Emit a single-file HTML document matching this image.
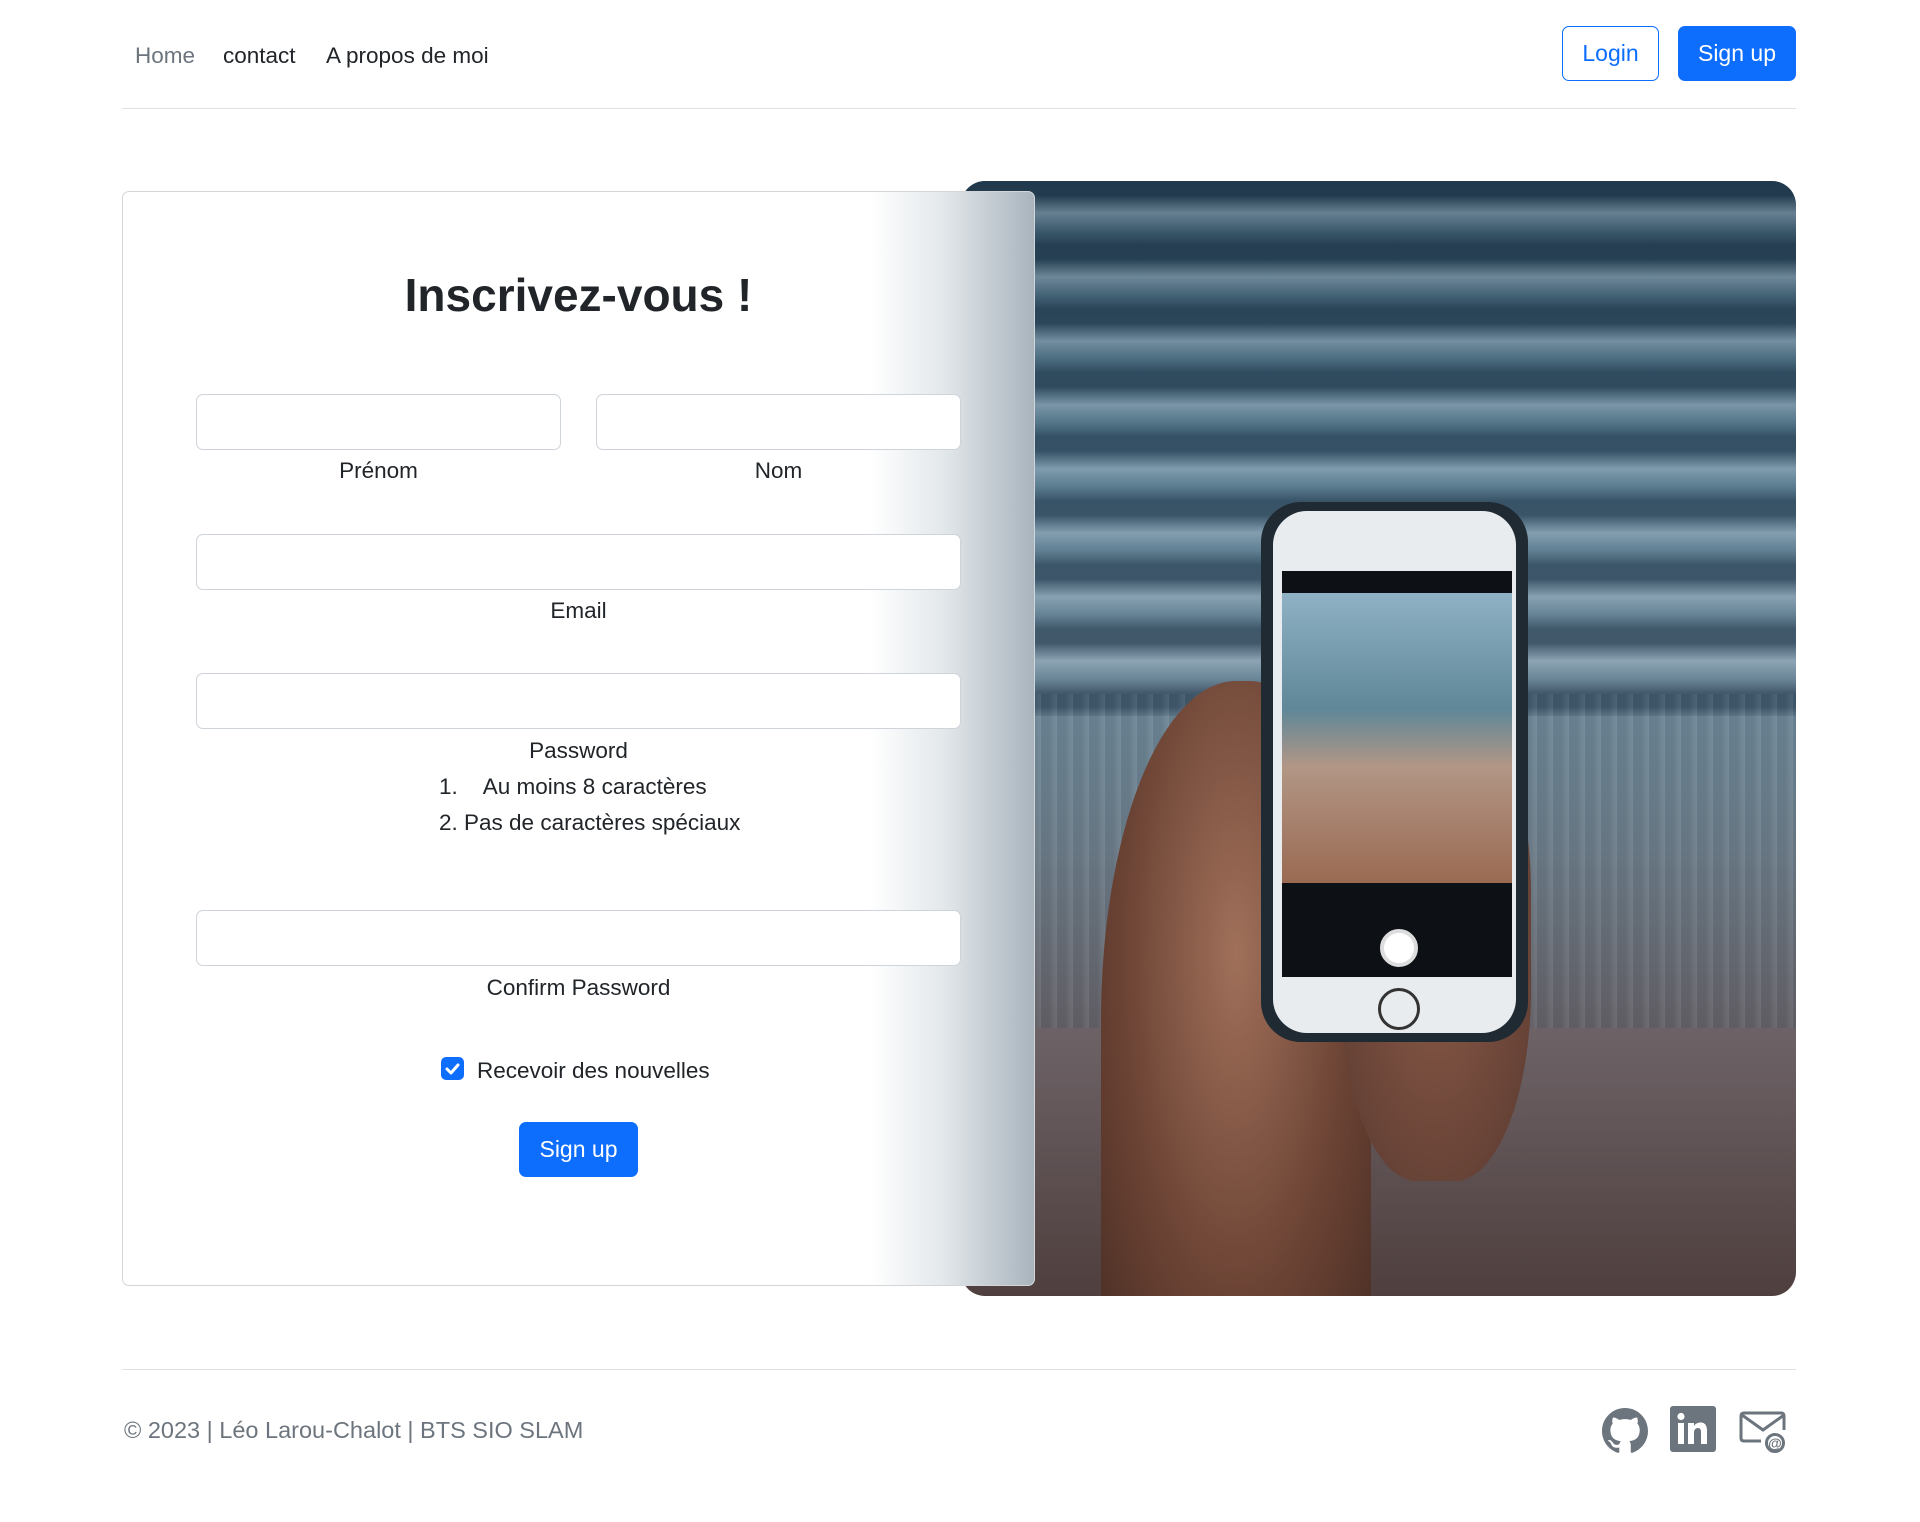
<!DOCTYPE html>
<html><head><meta charset="utf-8"><style>
*{box-sizing:border-box;margin:0;padding:0}
body{width:1920px;height:1522px;background:#fff;font-family:"Liberation Sans",sans-serif;color:#212529;position:relative;overflow:hidden;font-size:20px}
.abs{position:absolute}
.nav a{position:absolute;top:43px;font-size:22.5px;color:#212529;text-decoration:none}
.btn{position:absolute;border-radius:7px;font-size:23px;display:flex;align-items:center;justify-content:center}
.hr{position:absolute;left:122px;width:1674px;height:1px;background:#dee2e6}
.card{position:absolute;left:122px;top:191px;width:913px;height:1095px;border:1px solid #d3d6d9;border-radius:7px;background:linear-gradient(to right,#fff 0%,#fff 82%,#e3e8eb 90%,#a9b4bd 100%);z-index:2}
.inp{position:absolute;height:56px;border:1px solid #ced4da;border-radius:7px;background:#fff}
.lbl{position:absolute;text-align:center;font-size:22.5px;transform:translateY(-50%)}
</style></head><body>
<div class="nav">
<a style="left:135px;color:#6c757d">Home</a>
<a style="left:223px">contact</a>
<a style="left:326px">A propos de moi</a>
</div>
<div class="btn" style="left:1562px;top:26px;width:97px;height:55px;border:1px solid #0d6efd;color:#0d6efd">Login</div>
<div class="btn" style="left:1678px;top:26px;width:118px;height:55px;background:#0d6efd;color:#fff">Sign up</div>
<div class="hr" style="top:108px"></div>

<div class="abs" style="left:961px;top:181px;width:835px;height:1115px;border-radius:24px;overflow:hidden;background:linear-gradient(to bottom,#2a4759 0%,#5a7f93 25%,#7690a0 45%,#76828c 60%,#6e6468 75%,#4f3f3e 100%)">
 <div class="abs" style="left:0;top:0;width:100%;height:48%;background:repeating-linear-gradient(to bottom,rgba(25,45,65,.55) 0 14px,rgba(170,190,205,.45) 32px,rgba(80,110,130,.3) 50px,rgba(25,45,65,.55) 64px)"></div>
 <div class="abs" style="left:0;top:46%;width:100%;height:30%;background:repeating-linear-gradient(to right,rgba(40,70,90,.2) 0 8px,rgba(120,150,165,.2) 16px)"></div>
 <div class="abs" style="left:140px;top:500px;width:270px;height:680px;border-radius:50% 45% 0 0;background:radial-gradient(ellipse at 50% 40%,#a0705a,#6b4334 60%,#4a2e25)"></div>
 <div class="abs" style="left:380px;top:520px;width:190px;height:480px;border-radius:40%;background:radial-gradient(ellipse,#8a5a48,#5a3a30)"></div>
 <div class="abs" style="left:300px;top:321px;width:267px;height:540px;border-radius:40px;background:#1f2a33"></div>
 <div class="abs" style="left:312px;top:330px;width:243px;height:522px;border-radius:34px;background:#e9ecef"></div>
 <div class="abs" style="left:321px;top:390px;width:230px;height:406px;background:#0d1115"></div>
 <div class="abs" style="left:321px;top:412px;width:230px;height:290px;background:linear-gradient(to bottom,#8fb2c4 0%,#5f8798 40%,#b29685 60%,#9a6a52 100%)"></div>
 <div class="abs" style="left:419px;top:748px;width:38px;height:38px;border-radius:50%;border:4px solid #ddd;background:#fff"></div>
 <div class="abs" style="left:417px;top:807px;width:42px;height:42px;border-radius:50%;border:3px solid #333"></div>
</div>

<div class="card"></div>
<div style="position:absolute;left:0;top:0;z-index:3">
<div class="abs" style="left:122px;width:913px;top:268px;text-align:center;font-size:46px;font-weight:bold;white-space:nowrap">Inscrivez-vous !</div>
<div class="inp" style="left:196px;top:394px;width:365px"></div>
<div class="inp" style="left:596px;top:394px;width:365px"></div>
<div class="lbl" style="left:196px;width:365px;top:471px">Prénom</div>
<div class="lbl" style="left:596px;width:365px;top:471px">Nom</div>
<div class="inp" style="left:196px;top:534px;width:765px"></div>
<div class="lbl" style="left:196px;width:765px;top:611px">Email</div>
<div class="inp" style="left:196px;top:673px;width:765px"></div>
<div class="lbl" style="left:196px;width:765px;top:751px">Password</div>
<div class="lbl" style="left:439px;top:787px;text-align:left;white-space:nowrap">1.&nbsp;&nbsp;&nbsp;&nbsp;Au moins 8 caractères</div>
<div class="lbl" style="left:439px;top:823px;text-align:left;white-space:nowrap">2. Pas de caractères spéciaux</div>
<div class="inp" style="left:196px;top:910px;width:765px"></div>
<div class="lbl" style="left:196px;width:765px;top:988px">Confirm Password</div>
<div class="abs" style="left:441px;top:1057px;width:23px;height:23px;border-radius:5px;background:#0d6efd"><svg width="23" height="23" viewBox="0 0 23 23"><path d="M6 12l4 4 7-8" stroke="#fff" stroke-width="3" fill="none" stroke-linecap="round" stroke-linejoin="round"/></svg></div>
<div class="lbl" style="left:477px;top:1071px;white-space:nowrap;text-align:left">Recevoir des nouvelles</div>
<div class="btn" style="left:519px;top:1122px;width:119px;height:55px;background:#0d6efd;color:#fff">Sign up</div>
</div>

<div class="hr" style="top:1369px"></div>
<div class="abs" style="left:124px;top:1417px;font-size:23.5px;color:#6c757d">© 2023 | Léo Larou-Chalot | BTS SIO SLAM</div>
<svg class="abs" style="left:1602px;top:1408px" width="46" height="46" viewBox="0 0 16 16"><path fill="#6c757d" d="M8 0C3.58 0 0 3.580 0 8c0 3.54 2.29 6.53 5.47 7.59.4.07.55-.17.55-.38 0-.19-.01-.82-.01-1.49-2.010.37-2.53-.49-2.690-.94-.09-.23-.48-.94-.82-1.13-.28-.15-.68-.52-.01-.53.63-.01 1.08.58 1.23.82.72 1.21 1.87.87 2.33.66.07-.52.28-.87.51-1.07-1.78-.2-3.64-.89-3.64-3.95 0-.87.31-1.59.82-2.15-.08-.2-.36-1.02.08-2.12 0 0 .67-.21 2.2.82.64-.18 1.32-.27 2-.27.68 0 1.36.09 2 .27 1.53-1.04 2.2-.82 2.2-.82.44 1.1.16 1.92.08 2.12.51.56.82 1.27.82 2.15 0 3.07-1.87 3.75-3.65 3.95.29.25.54.73.54 1.48 0 1.07-.01 1.93-.01 2.2 0 .21.15.46.55.38A8.01 8.01 0 0016 8c0-4.42-3.58-8-8-8z"/></svg>
<svg class="abs" style="left:1670px;top:1406px" width="46" height="46" viewBox="0 0 46 46"><rect width="46" height="46" rx="3" fill="#6c757d"/><rect x="8" y="17" width="6" height="21" fill="#fff"/><circle cx="11" cy="10.5" r="3.6" fill="#fff"/><path d="M18 17h6v3c1.5-2.5 4-3.5 6.5-3.5 4.5 0 6.5 3 6.5 8V38h-6V26c0-2.5-1-4-3-4s-4 1.5-4 4.5V38h-6z" fill="#fff"/></svg>
<svg class="abs" style="left:1739px;top:1410px" width="48" height="44" viewBox="0 0 48 44"><path d="M22 31H5c-2 0-3-1-3-3V6c0-2 1-3 3-3h37c2 0 3 1 3 3v14" fill="none" stroke="#6c757d" stroke-width="3"/><path d="M3 5l21 15 21-15" fill="none" stroke="#6c757d" stroke-width="3"/><circle cx="36" cy="33" r="8.5" fill="none" stroke="#6c757d" stroke-width="3"/><text x="36" y="38" font-size="14" text-anchor="middle" fill="#6c757d" font-weight="bold" font-family="Liberation Sans">@</text></svg>
</body></html>
